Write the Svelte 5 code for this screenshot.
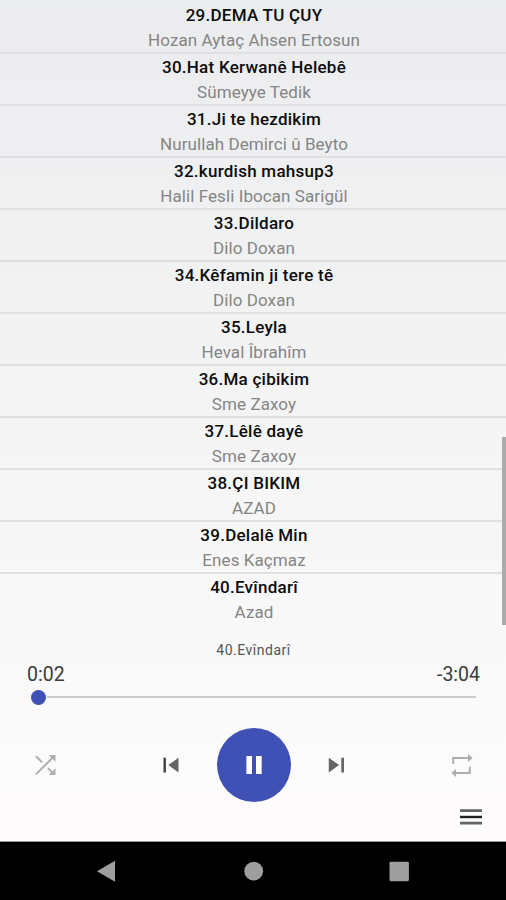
<script lang="ts">
  interface Song {
    title: string;
    artist: string;
  }

  const songs: Song[] = [
    { title: '29.DEMA TU ÇUY', artist: 'Hozan Aytaç Ahsen Ertosun' },
    { title: '30.Hat Kerwanê Helebê', artist: 'Sümeyye Tedik' },
    { title: '31.Ji te hezdikim', artist: 'Nurullah Demirci û Beyto' },
    { title: '32.kurdish mahsup3', artist: 'Halil Fesli Ibocan Sarigül' },
    { title: '33.Dildaro', artist: 'Dilo Doxan' },
    { title: '34.Kêfamin ji tere tê', artist: 'Dilo Doxan' },
    { title: '35.Leyla', artist: 'Heval Îbrahîm' },
    { title: '36.Ma çibikim', artist: 'Sme Zaxoy' },
    { title: '37.Lêlê dayê', artist: 'Sme Zaxoy' },
    { title: '38.ÇI BIKIM', artist: 'AZAD' },
    { title: '39.Delalê Min', artist: 'Enes Kaçmaz' },
    { title: '40.Evîndarî', artist: 'Azad' }
  ];

  let current = songs[songs.length - 1];
  let elapsed = '0:02';
  let remaining = '-3:04';
</script>

<div class="screen">
  <div class="list">
    {#each songs as song}
      <div class="song">
        <div class="title">{song.title}</div>
        <div class="artist">{song.artist}</div>
      </div>
    {/each}
    <div class="scrollbar"></div>
  </div>

  <div class="player">
    <div class="now-playing">{current.title}</div>

    <div class="times">
      <span>{elapsed}</span>
      <span>{remaining}</span>
    </div>

    <div class="seek">
      <div class="thumb"></div>
      <div class="track"></div>
    </div>

    <div class="controls">
      <button aria-label="Shuffle">
        <svg width="24" height="24" viewBox="0 0 24 24" fill="none" stroke="#adadad" stroke-width="2">
          <path d="M1.9 21.4L19.8 3.5M1.9 3.3L8.3 9.4M13.9 15.2L19.6 20.9" />
          <path d="M14.8 2h6.7v6.7zM21.5 15.3v6.7h-6.7z" fill="#adadad" stroke="none" />
        </svg>
      </button>
      <button aria-label="Previous">
        <svg width="24" height="24" viewBox="0 0 24 24">
          <path d="M4.5 4.7h2.4v14.8h-2.4z" fill="#3f3f3f" />
          <path d="M19.5 4.7v14.8L9.3 12.1z" fill="#656565" />
        </svg>
      </button>
      <button class="pause" aria-label="Pause">
        <svg width="24" height="24" viewBox="0 0 24 24" fill="#fff">
          <path d="M4.4 3h5.6v18h-5.6zM14 3h5.7v18H14z" />
        </svg>
      </button>
      <button aria-label="Next">
        <svg width="24" height="24" viewBox="0 0 24 24" fill="#656565">
          <path d="M3.8 4.7v14.8L14.1 12.1zM16.3 4.7h2.7v14.8h-2.7z" />
        </svg>
      </button>
      <button aria-label="Repeat">
        <svg width="24" height="24" viewBox="0 0 24 24" fill="none" stroke="#adadad" stroke-width="2">
          <path d="M3.2 11V5h15.5M19.8 13.8v6.2H4.5" />
          <path d="M18 1l4.6 4L18 9zM6 16L1.4 20L6 24z" fill="#adadad" stroke="none" />
        </svg>
      </button>
    </div>

    <svg class="menu" width="22" height="18" viewBox="0 0 22 18" fill="#666">
      <path d="M0 1.2h22v2.8H0z" />
      <path d="M0 7.8h22v2.4H0z" fill="#222" />
      <path d="M0 13.7h22v2.8H0z" />
    </svg>
  </div>

  <div class="navbar">
    <svg width="24" height="24" viewBox="0 0 24 24" fill="#9e9e9e">
      <path d="M3 12.2L21 1.8v21z" />
    </svg>
    <svg width="24" height="24" viewBox="0 0 24 24" fill="#9e9e9e">
      <circle cx="11.7" cy="12.2" r="9.4" />
    </svg>
    <svg width="24" height="24" viewBox="0 0 24 24" fill="#9e9e9e">
      <rect x="2.5" y="2.8" width="19.4" height="19.4" rx="1.4" />
    </svg>
  </div>
</div>

<style>
  :global(body) {
    margin: 0;
  }

  .screen {
    display: flex;
    flex-direction: column;
    width: 506px;
    height: 900px;
    overflow: hidden;
    background: linear-gradient(#ebecee, #f6f6f6 55%, #fdfbfc 88%);
    font-family: Roboto, 'Liberation Sans', sans-serif;
  }

  .list {
    position: relative;
    padding-top: 2px;
    text-align: center;
  }

  .song {
    box-sizing: border-box;
    height: 52px;
    padding-left: 2px;
    border-bottom: 2px solid #dfe0e1;
  }

  .song:nth-child(12) {
    border-bottom: none;
  }

  .title {
    height: 25px;
    line-height: 26px;
    font-size: 17px;
    font-weight: 500;
    letter-spacing: 0.25px;
    color: #0c0c0c;
  }

  .artist {
    line-height: 26px;
    font-size: 17px;
    letter-spacing: 0.08px;
    color: #858585;
  }

  .scrollbar {
    position: absolute;
    top: 437px;
    right: 0;
    width: 4.5px;
    height: 188px;
    background: #ababab;
  }

  .player {
    display: flex;
    flex-direction: column;
    height: 215px;
  }

  .now-playing {
    padding: 14px 0 0 1px;
    line-height: 20px;
    font-size: 14px;
    letter-spacing: 0.5px;
    text-align: center;
    color: #555;
  }

  .times {
    display: flex;
    justify-content: space-between;
    padding: 3px 26px 0 27px;
    line-height: 24px;
    font-size: 19.5px;
    color: #3c3c3c;
  }

  .seek {
    display: flex;
    align-items: center;
    gap: 1px;
    height: 15px;
    margin: 2.5px 30px 0 31px;
  }

  .thumb {
    width: 15px;
    height: 15px;
    border-radius: 50%;
    background: #3f51b5;
  }

  .track {
    flex: 1;
    height: 2px;
    background: #cbcbcb;
  }

  .controls {
    display: grid;
    grid-template-columns: 91px 160px 5px 161px 89px;
    align-items: center;
    justify-items: center;
    height: 74px;
    margin-top: 23.5px;
  }

  button {
    display: flex;
    align-items: center;
    justify-content: center;
    padding: 0;
    border: none;
    background: none;
  }

  .pause {
    width: 74px;
    height: 74px;
    border-radius: 50%;
    background: #3f51b5;
  }

  .menu {
    align-self: flex-end;
    margin: 6px 24px 0 0;
  }

  .navbar {
    box-sizing: border-box;
    display: grid;
    grid-template-columns: 212px 83px 208px;
    justify-items: center;
    flex: 1;
    padding-top: 17px;
    border-top: 1px solid #999;
    background: #000;
  }
</style>
